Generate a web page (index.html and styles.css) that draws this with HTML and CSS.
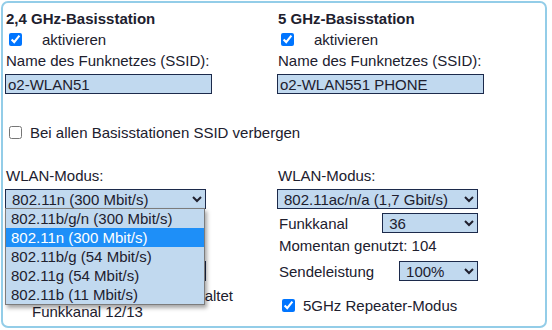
FILE: index.html
```html
<!DOCTYPE html>
<html lang="de">
<head>
<meta charset="UTF-8" />
<meta name="viewport" content="width=device-width, initial-scale=1" />
<title>WLAN Basisstationen</title>
<link rel="stylesheet" href="styles.css">
</head>
<body>
<div class="panel">
  <div class="cols">
    <section class="station">
      <h2>2,4 GHz-Basisstation</h2>
      <label class="check"><input type="checkbox" checked><span class="txt txt-wide">aktivieren</span></label>
      <div class="label">Name des Funknetzes (SSID):</div>
      <input class="ssid" type="text" value="o2-WLAN51">
    </section>
    <section class="station">
      <h2>5 GHz-Basisstation</h2>
      <label class="check"><input type="checkbox" checked><span class="txt txt-wide">aktivieren</span></label>
      <div class="label">Name des Funknetzes (SSID):</div>
      <input class="ssid" type="text" value="o2-WLAN551 PHONE">
    </section>
  </div>

  <label class="check hide-ssid"><input type="checkbox"><span class="txt">Bei allen Basisstationen SSID verbergen</span></label>

  <div class="cols">
    <section class="station">
      <div class="label label-mode">WLAN-Modus:</div>
      <div class="select-wrap">
        <select class="mode">
          <option>802.11b/g/n (300 Mbit/s)</option>
          <option selected>802.11n (300 Mbit/s)</option>
          <option>802.11b/g (54 Mbit/s)</option>
          <option>802.11g (54 Mbit/s)</option>
          <option>802.11b (11 Mbit/s)</option>
        </select>
        <!-- geöffnete Auswahlliste -->
        <ul class="popup">
          <li>802.11b/g/n (300 Mbit/s)</li>
          <li class="active">802.11n (300 Mbit/s)</li>
          <li>802.11b/g (54 Mbit/s)</li>
          <li>802.11g (54 Mbit/s)</li>
          <li>802.11b (11 Mbit/s)</li>
        </ul>
      </div>
      <div class="row row-select">
        <span>Funkkanal</span>
        <select class="channel channel-left"><option>Auto</option></select>
      </div>
      <div class="row row-text">Momentan genutzt: 11</div>
      <div class="row row-select">
        <span>Sendeleistung</span>
        <select class="power"><option>100%</option></select>
      </div>
      <label class="check check-last check-top"><input type="checkbox" checked><span class="txt txt-wrap">Kanalbündelung eingeschaltet Funkkanal 12/13</span></label>
    </section>
    <section class="station">
      <div class="label label-mode">WLAN-Modus:</div>
      <div class="select-wrap">
        <select class="mode">
          <option>802.11ac/n/a (1,7 Gbit/s)</option>
        </select>
      </div>
      <div class="row row-select">
        <span>Funkkanal</span>
        <select class="channel"><option>36</option></select>
      </div>
      <div class="row row-text">Momentan genutzt: 104</div>
      <div class="row row-select">
        <span>Sendeleistung</span>
        <select class="power"><option>100%</option></select>
      </div>
      <label class="check check-last"><input type="checkbox" checked><span class="txt">5GHz Repeater-Modus</span></label>
    </section>
  </div>
</div>
</body>
</html>
```

FILE: styles.css
```css
body {
  margin: 0;
  background: #fff;
  color: #20202e;
  font-family: "Liberation Sans", Arial, sans-serif;
  font-size: 15px;
}
.panel {
  position: relative;
  box-sizing: border-box;
  width: 546px;
  height: 327px;
  margin: 1px;
  padding: 5px 2px 0;
  border: 2px solid #93cde8;
  border-radius: 7px;
}
.cols {
  display: grid;
  grid-template-columns: 272px 272px;
}
h2 {
  margin: 0;
  padding-left: 1px;
  font-size: 15px;
  line-height: 21px;
  font-weight: bold;
}
.label {
  padding-left: 1px;
  line-height: 22px;
}
.check {
  display: flex;
  align-items: center;
  height: 21px;
}
.check input {
  width: 13px;
  height: 13px;
  margin: 0 0 0 4px;
  flex: none;
}
.txt {
  margin-left: 8px;
}
.txt-wide {
  margin-left: 20px;
}
.ssid {
  display: block;
  box-sizing: border-box;
  width: 207px;
  height: 20px;
  margin-top: 2px;
  padding: 0 2px;
  border: 1px solid #1c2a4b;
  background: #c1d9ef;
  color: #20202e;
  font: inherit;
}
.hide-ssid {
  height: 22px;
  margin-top: 27px;
}
.label-mode {
  margin-top: 22px;
}
select {
  box-sizing: border-box;
  height: 20px;
  padding: 0 0 0 2px;
  border: 1px solid #1c2a4b;
  border-radius: 0;
  background-color: #c1d9ef;
  color: #20202e;
  font: inherit;
}
.select-wrap {
  position: relative;
  margin-top: 2px;
  height: 20px;
}
.mode {
  width: 201px;
}
.row {
  display: flex;
  align-items: center;
  padding-left: 2px;
}
.row-select {
  height: 20px;
  margin-top: 4px;
}
.row-text {
  margin-top: 2px;
  line-height: 22px;
}
.channel {
  width: 96px;
  margin-left: 34px;
}
.channel-left {
  width: 70px;
}
.power {
  width: 79px;
  margin-left: 25px;
}
.check-last {
  height: 34px;
  margin-top: 7px;
}
.check-last input {
  margin-left: 5px;
}
.check-top {
  align-items: flex-start;
}
.check-top input {
  margin: 2px 0 0 4px;
}
.txt-wrap {
  width: 205px;
  margin-left: 10px;
  line-height: 16px;
}
.popup {
  position: absolute;
  z-index: 2;
  top: 19px;
  left: 0;
  width: 200px;
  margin: 0;
  padding: 0;
  list-style: none;
  box-sizing: border-box;
  border: 1px solid #7c7c7c;
  background: #c1d9ef;
  box-shadow: 2px 3px 4px rgba(0, 0, 0, 0.35);
}
.popup li {
  height: 19px;
  padding-left: 5px;
  line-height: 19px;
  white-space: nowrap;
}
.popup li.active {
  background: #1e8ff8;
  color: #fff;
}
```
